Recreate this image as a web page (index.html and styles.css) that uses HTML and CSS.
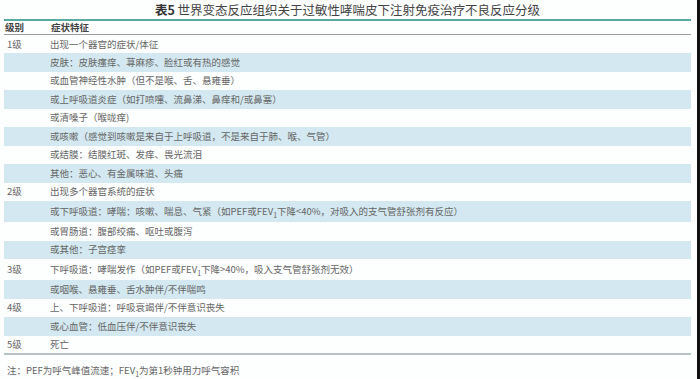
FILE: index.html
```html
<!DOCTYPE html>
<html lang="zh-CN">
<head>
<meta charset="utf-8">
<link rel="stylesheet" href="styles.css">
</head>
<body>
<div class="page">
  <div class="main">
    <h1 class="title"><b>表5</b> 世界变态反应组织关于过敏性哮喘皮下注射免疫治疗不良反应分级</h1>
    <table class="grade">
      <thead>
        <tr><th class="c1">级别</th><th>症状特征</th></tr>
      </thead>
      <tbody>
        <tr><td class="c1">1级</td><td>出现一个器官的症状/体征</td></tr>
        <tr class="alt"><td class="c1"></td><td>皮肤：皮肤瘙痒、荨麻疹、脸红或有热的感觉</td></tr>
        <tr><td class="c1"></td><td>或血管神经性水肿（但不是喉、舌、悬雍垂）</td></tr>
        <tr class="alt"><td class="c1"></td><td>或上呼吸道炎症（如打喷嚏、流鼻涕、鼻痒和/或鼻塞）</td></tr>
        <tr><td class="c1"></td><td>或清嗓子（喉咙痒)</td></tr>
        <tr class="alt"><td class="c1"></td><td>或咳嗽（感觉到咳嗽是来自于上呼吸道，不是来自于肺、喉、气管）</td></tr>
        <tr><td class="c1"></td><td>或结膜：结膜红斑、发痒、畏光流泪</td></tr>
        <tr class="alt"><td class="c1"></td><td>其他：恶心、有金属味道、头痛</td></tr>
        <tr><td class="c1">2级</td><td>出现多个器官系统的症状</td></tr>
        <tr class="alt tall"><td class="c1"></td><td>或下呼吸道：哮喘：咳嗽、喘息、气紧（如PEF或FEV<sub>1</sub>下降&lt;40%，对吸入的支气管舒张剂有反应）</td></tr>
        <tr><td class="c1"></td><td>或胃肠道：腹部绞痛、呕吐或腹泻</td></tr>
        <tr class="alt"><td class="c1"></td><td>或其他：子宫痉挛</td></tr>
        <tr class="tall"><td class="c1">3级</td><td>下呼吸道：哮喘发作（如PEF或FEV<sub>1</sub>下降&gt;40%，吸入支气管舒张剂无效）</td></tr>
        <tr class="alt"><td class="c1"></td><td>或咽喉、悬雍垂、舌水肿伴/不伴喘鸣</td></tr>
        <tr><td class="c1">4级</td><td>上、下呼吸道：呼吸衰竭伴/不伴意识丧失</td></tr>
        <tr class="alt"><td class="c1"></td><td>或心血管：低血压伴/不伴意识丧失</td></tr>
        <tr class="last"><td class="c1">5级</td><td>死亡</td></tr>
      </tbody>
    </table>
    <p class="note">注：PEF为呼气峰值流速；FEV<sub>1</sub>为第1秒钟用力呼气容积</p>
  </div>
  <div class="edge"></div>
</div>
</body>
</html>
```

FILE: styles.css
```css
* { box-sizing: border-box; }
html, body { margin: 0; padding: 0; background: #fdfefe; }
body {
  font-family: "Noto Sans CJK SC", "Noto Sans", sans-serif;
  color: #666;
  font-size: 9.5px;
}
.page {
  display: flex;
  width: 700px;
  height: 379px;
}
.main {
  flex: 1;
  padding: 0 6px 0 4px;
}
.edge {
  width: 3px;
  background: #111;
}
.title {
  margin: 0;
  height: 19px;
  line-height: 19px;
  font-size: 12.5px;
  font-weight: normal;
  color: #444;
  text-align: center;
}
.title b { font-weight: bold; color: #333; }
.grade {
  width: 100%;
  border-collapse: collapse;
  border-top: 2px solid #5aaaa4;
  border-bottom: 2px solid #b6c3c6;
}
.grade th {
  text-align: left;
  font-weight: bold;
  color: #444;
  height: 14px;
  line-height: 13px;
  padding: 0 0 0 1px;
  border-bottom: 1px solid #9aa0a2;
}
.grade td {
  height: 18.5px;
  line-height: 13px;
  padding: 0;
  white-space: nowrap;
}
.grade .c1 { width: 46px; padding-left: 3px; }
.grade th.c1 { padding-left: 1px; }
.grade tr.alt td { background: #d3e8f0; }
.grade tr.tall td { height: 21px; }
sub { font-size: 7px; line-height: 0; vertical-align: -3px; }
.note {
  margin: 9px 0 0 3px;
  line-height: 13px;
}
```
